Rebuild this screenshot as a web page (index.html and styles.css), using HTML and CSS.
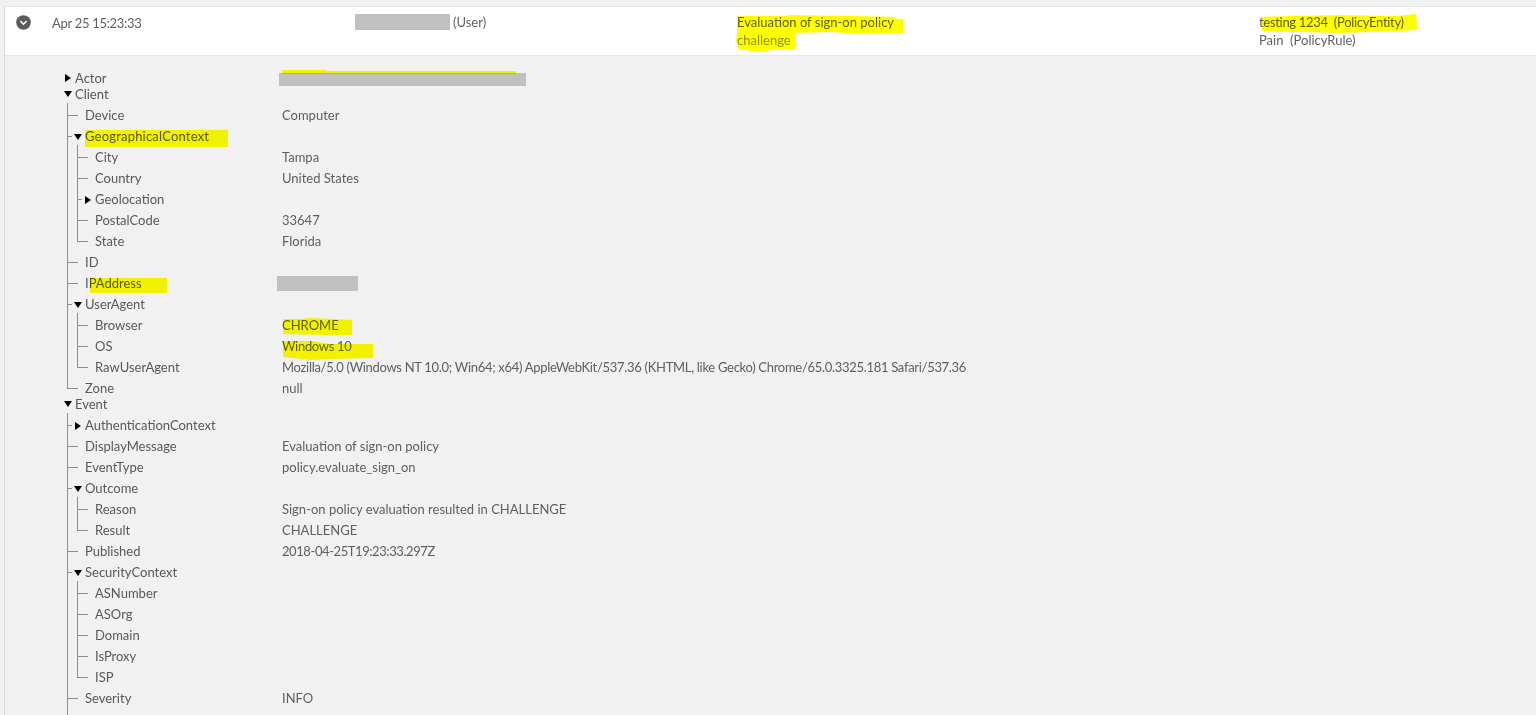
FILE: index.html
```html
<!DOCTYPE html>
<html lang="en">
<head>
<meta charset="utf-8">
<title>Event log</title>
<link rel="stylesheet" href="styles.css">
</head>
<body>
<div class="panel">
  <div class="summary">
    <div class="c-toggle">
      <svg class="chev" viewBox="0 0 16 16"><circle cx="8" cy="8" r="7.8" fill="#5a5a5a"/><path d="M4.6 6.4 8 9.8l3.4-3.4" fill="none" stroke="#fff" stroke-width="1.6"/></svg>
    </div>
    <div class="c-time tight">Apr 25 15:23:33</div>
    <div class="c-actor"><span class="redact r-user"></span> (User)</div>
    <div class="c-event"><div>Evaluation of sign-on policy</div><div class="muted">challenge</div></div>
    <div class="c-target"><div class="tight">testing 1234&nbsp; (PolicyEntity)</div><div>Pain&nbsp; (PolicyRule)</div></div>
  </div>
  <div class="details">
    <div class="row top"><i class="tri right"></i><span class="key">Actor</span><span class="val"><span class="redact r-actor"></span></span></div>
    <div class="row top"><i class="tri down"></i><span class="key">Client</span></div>
    <div class="branch">
      <div class="row leaf"><span class="key">Device</span><span class="val">Computer</span></div>
      <div class="row"><i class="tri down"></i><span class="key wide">GeographicalContext</span></div>
      <div class="branch">
        <div class="row leaf"><span class="key">City</span><span class="val">Tampa</span></div>
        <div class="row leaf"><span class="key">Country</span><span class="val">United States</span></div>
        <div class="row"><i class="tri right"></i><span class="key">Geolocation</span></div>
        <div class="row leaf"><span class="key">PostalCode</span><span class="val">33647</span></div>
        <div class="row leaf"><span class="key">State</span><span class="val">Florida</span></div>
      </div>
      <div class="row leaf"><span class="key">ID</span></div>
      <div class="row leaf"><span class="key">IPAddress</span><span class="val"><span class="redact r-ip"></span></span></div>
      <div class="row"><i class="tri down"></i><span class="key">UserAgent</span></div>
      <div class="branch">
        <div class="row leaf"><span class="key">Browser</span><span class="val">CHROME</span></div>
        <div class="row leaf"><span class="key">OS</span><span class="val tight">Windows 10</span></div>
        <div class="row leaf"><span class="key">RawUserAgent</span><span class="val tight">Mozilla/5.0 (Windows NT 10.0; Win64; x64) AppleWebKit/537.36 (KHTML, like Gecko) Chrome/65.0.3325.181 Safari/537.36</span></div>
      </div>
      <div class="row leaf"><span class="key">Zone</span><span class="val">null</span></div>
    </div>
    <div class="row top"><i class="tri down"></i><span class="key">Event</span></div>
    <div class="branch open-end">
      <div class="row"><i class="tri right"></i><span class="key">AuthenticationContext</span></div>
      <div class="row leaf"><span class="key">DisplayMessage</span><span class="val">Evaluation of sign-on policy</span></div>
      <div class="row leaf"><span class="key">EventType</span><span class="val">policy.evaluate_sign_on</span></div>
      <div class="row"><i class="tri down"></i><span class="key">Outcome</span></div>
      <div class="branch">
        <div class="row leaf"><span class="key">Reason</span><span class="val">Sign-on policy evaluation resulted in CHALLENGE</span></div>
        <div class="row leaf"><span class="key">Result</span><span class="val">CHALLENGE</span></div>
      </div>
      <div class="row leaf"><span class="key">Published</span><span class="val stamp">2018-04-25T19:23:33.297Z</span></div>
      <div class="row"><i class="tri down"></i><span class="key">SecurityContext</span></div>
      <div class="branch">
        <div class="row leaf"><span class="key">ASNumber</span></div>
        <div class="row leaf"><span class="key">ASOrg</span></div>
        <div class="row leaf"><span class="key">Domain</span></div>
        <div class="row leaf"><span class="key">IsProxy</span></div>
        <div class="row leaf"><span class="key">ISP</span></div>
      </div>
      <div class="row leaf"><span class="key">Severity</span><span class="val">INFO</span></div>
    </div>
  </div>
</div>
<svg class="marks" viewBox="0 0 1536 715" aria-hidden="true">
  <path d="M737 16 785 16 790 15 850 16 895 17 897 19 903 19 903 33 860 34 830 32 795 33 795 49 770 50 765 52 750 51 738 49 736 40 737 33Z"/>
  <path d="M1261 17 1290 16 1340 15 1395 16 1416 14 1417 30 1395 31 1340 33 1300 32 1262 31Z"/>
  <path d="M282 70h44v1h190v3H282z"/>
  <path d="M85 130h143v17H85z"/>
  <path d="M90 278h77v15H90z"/>
  <path d="M283 319H300L310 318 352 320V335H325L283 334Z"/>
  <path d="M283 341H313L329 344 373 344V358L330 359 312 360 283 357Z"/>
</svg>
</body>
</html>
```
FILE: styles.css
```css
* { box-sizing: border-box; }
html, body { margin: 0; height: 715px; overflow: hidden; }
body {
  position: relative;
  background: #f1f1f1;
  font-family: Lato, "Liberation Sans", sans-serif;
  font-size: 13px;
  color: #5e5e64;
}
.panel {
  margin: 6px 0 0 4px;
  border-left: 1px solid #d9d9d9;
  border-top: 1px solid #e6e6e6;
  height: 709px;
}
.summary {
  display: flex;
  height: 49px;
  background: #fff;
  border-bottom: 1px solid #e8e8e8;
}
.c-toggle { width: 47px; padding: 8px 0 0 11px; }
.chev { width: 15px; height: 15px; display: block; }
.c-time { width: 303px; padding-top: 8px; }
.c-actor { width: 382px; padding-top: 6px; line-height: 18px; display: flex; gap: 3px; align-items: flex-start; }
.c-event { width: 522px; padding-top: 6px; line-height: 18px; }
.c-target { flex: 1; padding-top: 6px; line-height: 18px; }
.muted { color: #909096; }
.tight { letter-spacing: -0.3px; }
.stamp { letter-spacing: -0.42px; }
.redact { display: inline-block; background: #c0c0c0; }
.r-user { width: 95px; height: 16px; margin-top: 1px; }
.r-actor { width: 247px; height: 13px; margin: 2px 0 0 -3px; }
.r-ip { width: 81px; height: 15px; margin-left: -5px; }

.details { padding: 14px 0 0 70px; --key: 207px; }
.row { position: relative; display: flex; height: 21px; line-height: 21px; }
.row.top { height: 16px; line-height: 16px; }
.key { width: var(--key); flex: none; color: #58585e; }
.key.wide { letter-spacing: 0.2px; }
.val { display: flex; align-items: center; }

.branch { position: relative; padding-left: 10px; --key: 197px; }
.branch .branch { --key: 187px; }
.details > .branch { margin: 3px 0 -3px; }
.branch::before {
  content: "";
  position: absolute;
  left: -8px;
  top: -2px;
  bottom: 10px;
  width: 1px;
  background: #8e8e8e;
}
.branch.open-end { padding-bottom: 10px; }
.branch.open-end::before { bottom: 0; }
.branch > .row::before {
  content: "";
  position: absolute;
  left: -18px;
  top: 10px;
  width: 11px;
  height: 1px;
  background: #8e8e8e;
}
.branch > .row:not(.leaf)::before { width: 5px; }

.tri { position: absolute; width: 0; height: 0; border-style: solid; border-color: transparent; }
.row > .tri.right { left: -10px; top: 50%; margin-top: -4px; border-width: 4px 0 4px 6px; border-left-color: #000; }
.row > .tri.down { left: -11px; top: 50%; margin-top: -3px; border-width: 6px 4.5px 0; border-top-color: #000; }

.marks {
  position: absolute;
  left: 0;
  top: 0;
  width: 1536px;
  height: 715px;
  fill: #ffff00;
  mix-blend-mode: multiply;
  pointer-events: none;
}
```
